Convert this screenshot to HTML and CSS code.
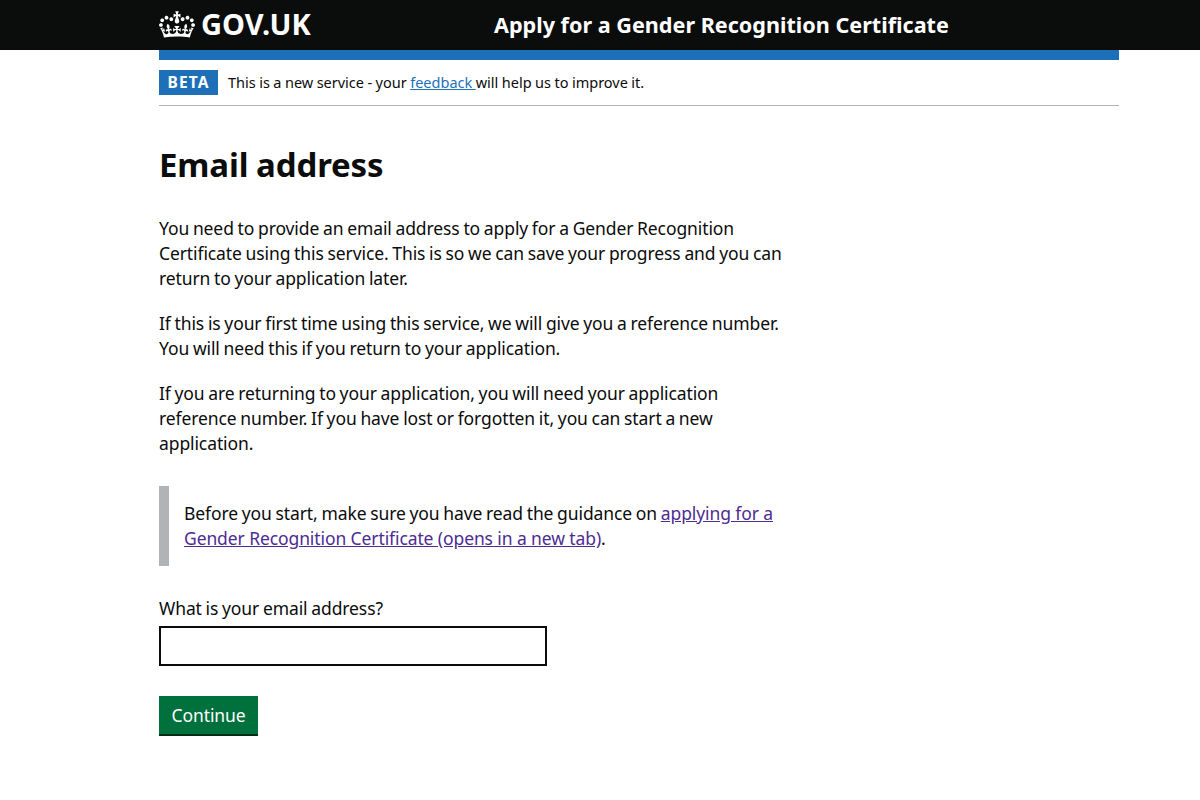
FILE: index.html
```html
<!DOCTYPE html>
<html lang="en">
<head>
  <meta charset="UTF-8">
  <title>Email address - Apply for a Gender Recognition Certificate</title>
  <link rel="stylesheet" href="styles.css">
</head>
<body>
  <header class="site-header">
    <div class="header-inner">
      <a href="#" class="logo">
        <svg class="crown" viewBox="0 0 132 97" width="36" height="27" aria-hidden="true">
          <path fill="#fff" d="M25 30.2c3.5 1.5 7.7-.2 9.1-3.7 1.5-3.6-.2-7.8-3.9-9.2-3.6-1.4-7.6.3-9.1 3.9-1.4 3.5.3 7.5 3.9 9zM9 39.5c3.6 1.5 7.8-.2 9.2-3.7 1.5-3.6-.2-7.8-3.9-9.1-3.6-1.5-7.6.2-9.1 3.8-1.4 3.5.3 7.5 3.8 9zM4.4 57.2c3.5 1.5 7.7-.2 9.1-3.8 1.5-3.6-.2-7.7-3.9-9.1-3.5-1.5-7.6.3-9.1 3.8-1.4 3.5.3 7.6 3.9 9.1zm38.3-21.4c3.5 1.5 7.7-.2 9.1-3.8 1.5-3.6-.2-7.7-3.9-9.1-3.6-1.5-7.6.3-9.1 3.8-1.3 3.6.4 7.7 3.9 9.1zm64.4-5.6c-3.6 1.5-7.8-.2-9.1-3.7-1.5-3.6.2-7.8 3.8-9.2 3.6-1.4 7.7.3 9.2 3.9 1.3 3.5-.4 7.5-3.9 9zm15.9 9.3c-3.6 1.5-7.7-.2-9.1-3.7-1.5-3.6.2-7.8 3.7-9.1 3.6-1.5 7.7.2 9.2 3.8 1.5 3.5-.3 7.5-3.8 9zm4.7 17.7c-3.6 1.5-7.8-.2-9.2-3.8-1.5-3.6.2-7.7 3.9-9.1 3.6-1.5 7.7.3 9.2 3.8 1.3 3.5-.4 7.6-3.9 9.1zM89.3 35.8c-3.6 1.5-7.8-.2-9.2-3.8-1.4-3.6.2-7.7 3.9-9.1 3.6-1.5 7.7.3 9.2 3.8 1.4 3.6-.3 7.7-3.9 9.1zM69.7 17.7l8.9 4.7V9.3l-8.9 2.8c-.3-.3-.5-.6-.9-.9L72.4 0H59.6l3.5 11.2c-.3.3-.6.5-.9.9l-8.8-2.8v13.1l8.8-4.7c.3.3.6.7.9.9l-5 15.4v.1c-.2.8-.4 1.6-.4 2.4 0 4.1 3.1 7.5 7 8.1h.2c.3 0 .7.1 1 .1.4 0 .7 0 1-.1h.2c4-.6 7.1-4.1 7.1-8.1 0-.8-.1-1.7-.4-2.4V34l-5.1-15.4c.4-.2.7-.6 1-.9zM66 92.8c16.9 0 32.8 1.1 47.1 3.2 4-16.9 8.9-26.7 14-33.5l-9.6-3.4c1 4.9 1.1 7.2 0 10.2-1.5-1.4-3-4.3-4.2-8.7L108.6 76c2.8-2 5-3.2 7.5-3.3-4.4 9.4-10 11.9-13.6 11.2-4.3-.8-6.3-4.6-5.6-7.9 1-4.7 5.7-5.9 8-.5 4.3-8.7-3-11.4-7.6-8.8 7.1-7.2 7.9-13.5 2.1-21.1-8 6.1-8.1 12.3-4.5 20.8-4.7-5.4-12.1-2.5-9.5 6.2 3.4-5.2 7.9-2 7.2 3.1-.6 4.3-6.4 7.8-13.5 7.2-10.3-.9-10.9-8-11.2-13.8 2.5-.5 7.1 1.8 11 7.3L80.2 60c-4.1 4.4-8 5.3-12.3 5.4 1.4-4.4 8-11.6 8-11.6H55.5s6.4 7.2 7.9 11.6c-4.2-.1-8-1-12.3-5.4l1.4 16.4c3.9-5.5 8.5-7.7 10.9-7.3-.3 5.8-.9 12.8-11.1 13.8-7.2.6-12.9-2.9-13.5-7.2-.7-5 3.8-8.3 7.1-3.1 2.7-8.7-4.6-11.6-9.4-6.2 3.7-8.5 3.6-14.7-4.6-20.8-5.8 7.6-5 13.9 2.2 21.1-4.7-2.6-11.9.1-7.7 8.8 2.3-5.5 7.1-4.2 8.1.5.7 3.3-1.3 7.1-5.7 7.9-3.5.7-9-1.8-13.5-11.2 2.5.1 4.7 1.3 7.5 3.3l-4.7-15.4c-1.2 4.4-2.7 7.2-4.3 8.7-1.1-3-.9-5.3 0-10.2l-9.5 3.4c5 6.9 9.9 16.7 14 33.5 14.8-2.1 30.8-3.2 47.7-3.2z"/>
        </svg>
        <span class="logo-text">GOV.UK</span>
      </a>
      <a href="#" class="service-name">Apply for a Gender Recognition Certificate</a>
    </div>
  </header>

  <div class="page">
    <div class="blue-bar"></div>
    <div class="phase-banner">
      <strong class="phase-tag">BETA</strong>
      <span class="phase-text">This is a new service - your <a href="#" class="feedback-link">feedback </a>will help us to improve it.</span>
    </div>

    <main class="main">
      <h1 class="heading">Email address</h1>
      <p class="body-text">You need to provide an email address to apply for a Gender Recognition Certificate using this service. This is so we can save your progress and you can return to your application later.</p>
      <p class="body-text">If this is your first time using this service, we will give you a reference number. You will need this if you return to your application.</p>
      <p class="body-text">If you are returning to your application, you will need your application reference number. If you have lost or forgotten it, you can start a new application.</p>

      <div class="inset">
        Before you start, make sure you have read the guidance on <a href="#" class="visited-link">applying for a Gender Recognition Certificate (opens in a new tab)</a>.
      </div>

      <form>
        <label class="label" for="email">What is your email address?</label>
        <input class="input" id="email" type="email">
        <button class="button" type="button">Continue</button>
      </form>
    </main>
  </div>
</body>
</html>
```

FILE: styles.css
```css
body {
  margin: 0;
  font-family: "Noto Sans", Arial, sans-serif;
  font-size: 17.5px;
  line-height: 25px;
  letter-spacing: -0.1px;
  word-spacing: -0.7px;
  color: #0b0c0c;
  background-color: #fff;
}

.site-header {
  background-color: #0b0c0c;
  height: 50px;
}

.header-inner {
  width: 960px;
  margin-left: 159px;
  display: flex;
  align-items: center;
  height: 48px;
}

.logo {
  width: 335px;
  display: flex;
  align-items: center;
  gap: 6px;
  color: #fff;
  text-decoration: none;
}

.crown {
  display: block;
}

.logo-text {
  font-size: 29px;
  font-weight: 700;
  line-height: 30px;
  letter-spacing: 0;
}

.service-name {
  font-size: 21.6px;
  font-weight: 700;
  letter-spacing: 0;
  word-spacing: 0;
  color: #fff;
  text-decoration: none;
  white-space: nowrap;
}

.page {
  width: 960px;
  margin-left: 159px;
}

.blue-bar {
  height: 10px;
  background-color: #1d70b8;
}

.phase-banner {
  display: flex;
  align-items: center;
  gap: 10px;
  height: 45px;
  border-bottom: 1px solid #b1b4b6;
}

.phase-tag {
  background-color: #1d70b8;
  color: #fff;
  font-size: 15.5px;
  line-height: 25px;
  letter-spacing: 1.1px;
  padding: 0 8.5px;
}

.phase-text {
  font-size: 14.5px;
  letter-spacing: 0;
  word-spacing: -0.3px;
}

.feedback-link {
  color: #1d70b8;
}

.main {
  width: 630px;
  padding-top: 39px;
}

.heading {
  font-size: 33px;
  line-height: 40px;
  font-weight: 700;
  letter-spacing: -0.15px;
  margin: 0 0 31px;
}

.body-text {
  margin: 0 0 20px;
}

.inset {
  border-left: 10px solid #b1b4b6;
  padding: 15px;
  margin: 30px 0;
}

.visited-link {
  color: #4c2c92;
  word-spacing: 0;
}

.label {
  display: block;
  margin-bottom: 5px;
}

.input {
  display: block;
  box-sizing: border-box;
  width: 388px;
  height: 40px;
  border: 2px solid #0b0c0c;
  border-radius: 0;
  padding: 5px;
  margin-bottom: 30px;
}

.button {
  display: block;
  box-sizing: border-box;
  font-family: inherit;
  font-size: 17.5px;
  line-height: 25px;
  letter-spacing: inherit;
  color: #fff;
  background-color: #00703c;
  border: none;
  border-bottom: 2px solid #002d18;
  border-radius: 0;
  padding: 7px 12.5px;
  height: 40px;
}
```
